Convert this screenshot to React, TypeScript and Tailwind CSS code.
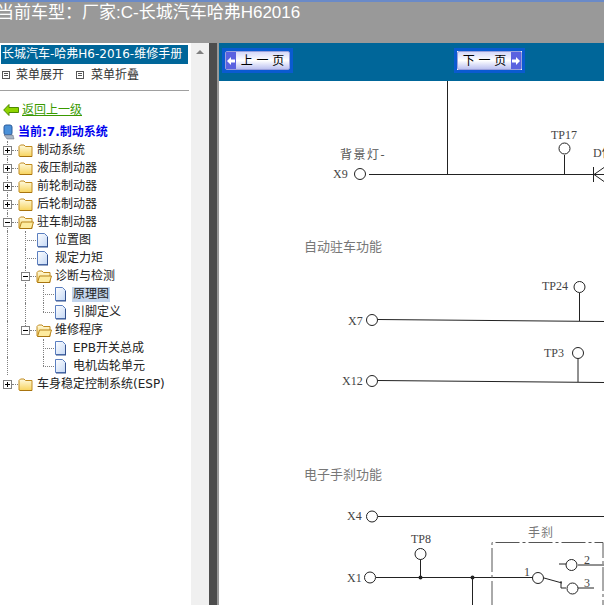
import React from "react";

const cjk = "font-['DejaVu_Sans','Noto_Sans_CJK_SC',sans-serif]";

type Row = {
  label: string;
  depth: number;
  kind: "closed" | "open" | "doc";
  selected?: boolean;
  last?: boolean;
  // the depth 1 guide stops at the last depth 1 node
  midGuide?: boolean;
};

const rows: Row[] = [
  { label: "制动系统", depth: 0, kind: "closed" },
  { label: "液压制动器", depth: 0, kind: "closed" },
  { label: "前轮制动器", depth: 0, kind: "closed" },
  { label: "后轮制动器", depth: 0, kind: "closed" },
  { label: "驻车制动器", depth: 0, kind: "open" },
  { label: "位置图", depth: 1, kind: "doc" },
  { label: "规定力矩", depth: 1, kind: "doc" },
  { label: "诊断与检测", depth: 1, kind: "open" },
  { label: "原理图", depth: 2, kind: "doc", selected: true, midGuide: true },
  { label: "引脚定义", depth: 2, kind: "doc", last: true, midGuide: true },
  { label: "维修程序", depth: 1, kind: "open", last: true },
  { label: "EPB开关总成", depth: 2, kind: "doc" },
  { label: "电机齿轮单元", depth: 2, kind: "doc", last: true },
  { label: "车身稳定控制系统(ESP)", depth: 0, kind: "closed", last: true },
];

const Folder = ({ open }: { open: boolean }) => (
  <svg width="16" height="15" viewBox="0 0 16 15" className="shrink-0">
    <defs>
      <linearGradient id="fold" x1="0" y1="0" x2="0" y2="1">
        <stop offset="0" stopColor="#fffbe0" />
        <stop offset="1" stopColor="#f7d35c" />
      </linearGradient>
    </defs>
    <path d="M1 13V3.5L2.5 2H6L7.5 3.5H14V13.5H2Z" fill="url(#fold)" stroke="#c08a1e" />
    {open && <path d="M1.5 13.5L3.5 7H15.5L13.5 13.5Z" fill="#fdeb9e" stroke="#b8841c" />}
    <path d="M2 13.5H14" stroke="#a8740f" />
  </svg>
);

const Doc = () => (
  <svg width="13" height="15" viewBox="0 0 13 15" className="shrink-0">
    <defs>
      <linearGradient id="page" x1="0" y1="0" x2="1" y2="1">
        <stop offset="0" stopColor="#ffffff" />
        <stop offset="1" stopColor="#c4d8f5" />
      </linearGradient>
    </defs>
    <path d="M1.5 .5H8.5L11.5 3.5V13.5H1.5Z" fill="url(#page)" stroke="#5b7fc0" />
    <path d="M11.5 4V14M2 14H12" stroke="#33508c" />
  </svg>
);

const Toggle = ({ open }: { open: boolean }) => (
  <span className="relative z-10 w-[9px] h-[9px] border border-[#808080] bg-white shrink-0 flex items-center justify-center">
    <span className="absolute w-[5px] h-px bg-black" />
    {!open && <span className="absolute w-px h-[5px] bg-black" />}
  </span>
);

const TreeRow = ({ row, index }: { row: Row; index: number }) => {
  const isDoc = row.kind === "doc";
  return (
    <div className="relative h-[18px] flex items-center" style={{ paddingLeft: 2 + row.depth * 18 }}>
      {index < rows.length - 1 && (
        <span className="absolute left-[6px] top-0 h-[18px] border-l border-dotted border-[#808080]" />
      )}
      {(row.depth === 1 || row.midGuide) && (
        <span
          className={`absolute left-[24px] top-0 border-l border-dotted border-[#808080] ${
            row.depth === 1 && row.last ? "h-[9px]" : "h-[18px]"
          }`}
        />
      )}
      {row.depth === 2 && (
        <span
          className={`absolute left-[42px] top-0 border-l border-dotted border-[#808080] ${
            row.last ? "h-[9px]" : "h-[18px]"
          }`}
        />
      )}
      {isDoc ? (
        <>
          <span className="w-[4px] shrink-0" />
          <span className="w-[11px] border-t border-dotted border-[#808080] shrink-0" />
          <Doc />
        </>
      ) : (
        <>
          <Toggle open={row.kind === "open"} />
          <span className="w-[6px] border-t border-dotted border-[#808080] shrink-0" />
          <Folder open={row.kind === "open"} />
        </>
      )}
      <span
        className={`text-[12px] leading-[15px] text-[#222] whitespace-nowrap ${
          isDoc ? "ml-[5px] px-px" : "ml-[3px]"
        } ${row.selected ? "bg-[#c3d5ec]" : ""}`}
      >
        {row.label}
      </span>
    </div>
  );
};

const PageButton = ({ label, next }: { label: string; next?: boolean }) => (
  <div className={`border-[3px] border-[#0a5ad0] ${next ? "bg-white" : "bg-[#0a5ad0]"} flex`}>
    <div className={`w-[65px] h-[19px] rounded-[2px] flex items-center ${next ? "flex-row-reverse" : ""} bg-gradient-to-b from-[#d5d8f8] via-white to-[#bcc1f0] border border-[#9aa0dc]`}>
      <span className="w-[10px] h-full bg-[#5a62e0] flex items-center justify-center shrink-0">
        <svg width="8" height="8" viewBox="0 0 8 8">
          <path d={next ? "M0 2.500H4V0L8 4L4 8V5.500H0Z" : "M8 2.500H4V0L0 4L4 8V5.500H8Z"} fill="#fff" />
        </svg>
      </span>
      <span className="flex-1 text-center text-[12px] leading-none text-black whitespace-pre">{label}</span>
    </div>
  </div>
);

const Pin = ({ x, y }: { x: number; y: number }) => (
  <circle cx={x} cy={y} r="5.5" fill="#fff" stroke="#222" strokeWidth="1" />
);

const serif = "'Liberation Serif','Noto Sans CJK SC',serif";

const Label = ({ x, y, children, size = 12, fill = "#444", spacing = 0 }: { x: number; y: number; children: React.ReactNode; size?: number; fill?: string; spacing?: number }) => (
  <text x={x} y={y} fontSize={size} fill={fill} fontFamily={serif} letterSpacing={spacing}>
    {children}
  </text>
);

// wiring diagram, coordinates are page pixels
const Diagram = () => (
  <svg width="385" height="524" viewBox="219 81 385 524" className="block">
    <g stroke="#222" strokeWidth="1" fill="none">
      <path d="M447.5 81V174.500M369 174.500H604M564.5 155V174" />
      <path d="M593.500 167V182M604 167.500L594 174.500L604 181.500" />
      <path d="M378 319.500L604 321.500M579.500 293V321" />
      <path d="M378 380.500L604 382.500M578 359V382" />
      <path d="M378 516.500H604" />
      <path d="M376 577.500H533M420.500 559V577M472.500 578V605" />
      <path d="M544 578L562 583M561 581V588H566" />
      <path d="M559 564H566M578 565H604M578 588H594" />
    </g>
    <path d="M492 605V542.500H603V605" fill="none" stroke="#555" strokeDasharray="24 3 3 3" />
    <circle cx="420.500" cy="577.500" r="2" fill="#222" />
    <circle cx="472.500" cy="577.500" r="2" fill="#222" />
    <Pin x={360} y={174} />
    <Pin x={564.500} y={148.500} />
    <Pin x={372} y={320} />
    <Pin x={579.500} y={287} />
    <Pin x={372} y={381} />
    <Pin x={578} y={353} />
    <Pin x={372} y={516.500} />
    <Pin x={370} y={577.500} />
    <Pin x={420.500} y={554} />
    <Pin x={538} y={578} />
    <Pin x={571.500} y={565} />
    <Pin x={572.500} y={588.500} />
    <Label x={340} y={159} size={12} fill="#555" spacing={1.500}>背景灯-</Label>
    <Label x={333} y={178}>X9</Label>
    <Label x={551} y={139}>TP17</Label>
    <Label x={593} y={157}>D信</Label>
    <Label x={304} y={251} size={13} fill="#777">自动驻车功能</Label>
    <Label x={542} y={290}>TP24</Label>
    <Label x={348} y={325}>X7</Label>
    <Label x={544} y={357}>TP3</Label>
    <Label x={342} y={385}>X12</Label>
    <Label x={304} y={479} size={13} fill="#777">电子手刹功能</Label>
    <Label x={347} y={520}>X4</Label>
    <Label x={411} y={543}>TP8</Label>
    <Label x={347} y={582}>X1</Label>
    <Label x={528} y={537} size={12} fill="#777" spacing={1}>手刹</Label>
    <Label x={524} y={576}>1</Label>
    <Label x={584} y={564}>2</Label>
    <Label x={584} y={587}>3</Label>
  </svg>
);

const MenuIcon = ({ className }: { className: string }) => (
  <span className={`w-[8px] h-[8px] border border-[#555] flex flex-col justify-center gap-px ${className}`}>
    <span className="h-px bg-[#555] mx-px" />
    <span className="h-px bg-[#555] mx-px" />
  </span>
);

export default function App() {
  return (
    <div className={`w-[604px] h-[605px] overflow-hidden flex flex-col bg-[#999999] ${cjk}`}>
      <div className="h-[43px] shrink-0 border-t-2 border-[#6a8ac8] pt-px overflow-hidden">
        <div className="-ml-[3px] font-['Liberation_Sans','Noto_Sans_CJK_SC',sans-serif] text-[17px] leading-[20px] text-white whitespace-nowrap">
          当前车型：厂家:C-长城汽车哈弗H62016
        </div>
      </div>
      <div className="flex-1 flex min-h-0">
        <aside className="w-[191px] bg-white shrink-0 pl-px">
          <div className="mt-[2px] h-[19px] w-[187px] bg-[#006699] text-white text-[12px] leading-[19px] pl-[1px] whitespace-nowrap overflow-hidden">
            长城汽车-哈弗H6-2016-维修手册
          </div>
          <div className="h-[24px] flex items-center text-[12px] text-[#333] pb-[3px]">
            <MenuIcon className="mr-[6px] ml-px" />
            菜单展开
            <MenuIcon className="ml-[12px] mr-[7px]" />
            菜单折叠
          </div>
          <div className="mt-[2px] h-px w-[189px] -ml-px bg-[#a0a0a0]" />
          <div className="mt-[10px] h-[18px] flex items-center">
            <svg width="16" height="12" viewBox="0 0 16 12" className="ml-[2px]">
              <path d="M6 .5L.7 6L6 11.500V8.500H15.500V3.500H6Z" fill="#8fd400" stroke="#4d8a00" />
            </svg>
            <span className="ml-[3px] text-[12px] leading-[15px] text-[#3a9a00] underline">返回上一级</span>
          </div>
          <div className="h-[22px] flex items-center pt-[4px]">
            <svg width="14" height="17" viewBox="0 0 14 17" className="ml-[1px]">
              <rect x="2" y="1" width="8" height="10" rx="2" fill="#4a90d8" stroke="#2a5c9c" />
              <path d="M2 11L5 15H12L11 11Z" fill="#a8b4c4" stroke="#667" strokeWidth=".5" />
            </svg>
            <span className="ml-[2px] text-[12px] leading-[15px] font-bold text-[#0000ee]">当前:7.制动系统</span>
          </div>
          <div className="mt-0">
            {rows.map((row, i) => (
              <TreeRow key={row.label} row={row} index={i} />
            ))}
          </div>
        </aside>
        <div className="w-[18px] shrink-0 bg-[#f0f0f0] flex justify-center pt-[7px]">
          <span className="w-0 h-0 border-x-[4px] border-x-transparent border-b-[4px] border-b-[#808080]" />
        </div>
        <div className="w-[8px] shrink-0 bg-[#4d4d4d]" />
        <div className="w-[2px] shrink-0 bg-[#999999]" />
        <main className="flex-1 min-w-0 bg-white flex flex-col">
          <div className="h-[38px] bg-[#006699] shrink-0 flex items-start pt-[5px] pl-[3px]">
            <PageButton label="上 一 页" />
            <div className="ml-[161px]">
              <PageButton label="下 一 页" next />
            </div>
          </div>
          <Diagram />
        </main>
      </div>
    </div>
  );
}
